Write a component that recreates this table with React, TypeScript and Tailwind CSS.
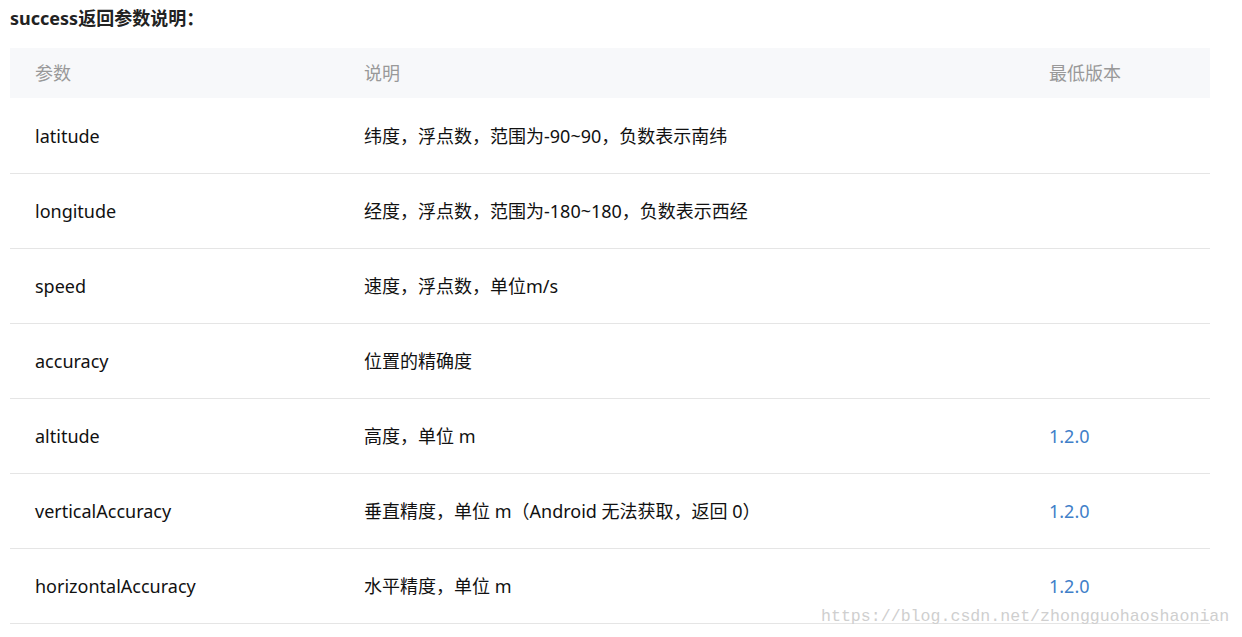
import React from "react";

const rows: [string, string, string][] = [
  ["latitude", "纬度，浮点数，范围为-90~90，负数表示南纬", ""],
  ["longitude", "经度，浮点数，范围为-180~180，负数表示西经", ""],
  ["speed", "速度，浮点数，单位m/s", ""],
  ["accuracy", "位置的精确度", ""],
  ["altitude", "高度，单位 m", "1.2.0"],
  ["verticalAccuracy", "垂直精度，单位 m（Android 无法获取，返回 0）", "1.2.0"],
  ["horizontalAccuracy", "水平精度，单位 m", "1.2.0"],
];

export default function App() {
  return (
    <div
      className="relative w-[1242px] h-[637px] bg-white overflow-hidden"
      style={{ fontFamily: '"Noto Sans", "Noto Sans CJK SC", sans-serif' }}
    >
      <div className="pl-[10px] pt-[6px] h-[48px]">
        <div className="text-[18px] font-bold leading-[24px] text-[#222]">success返回参数说明：</div>
      </div>
      <div className="ml-[10px] w-[1200px]">
        <div className="flex h-[50px] items-center bg-[#f7f8fa] text-[18px] text-[#999]">
          <div className="w-[329px] pl-[25px]">参数</div>
          <div className="w-[685px] pl-[25px]">说明</div>
          <div className="w-[186px] pl-[25px]">最低版本</div>
        </div>
        <div className="h-[1px]" />
        {rows.map(([a, b, c]) => (
          <div key={a} className="flex h-[75px] items-center border-b border-[#e5e5e5] text-[18px] text-[#111]">
            <div className="w-[329px] pl-[25px]">{a}</div>
            <div className="w-[685px] pl-[25px]">{b}</div>
            <div className="w-[186px] pl-[25px] text-[#3f7fc9]">{c}</div>
          </div>
        ))}
      </div>
      <div
        className="absolute left-[821px] top-[606px] text-[16.6px] leading-[22px] text-[#cfcfcf]"
        style={{ fontFamily: '"Liberation Mono", monospace' }}
      >
        https://blog.csdn.net/zhongguohaoshaonian
      </div>
    </div>
  );
}
